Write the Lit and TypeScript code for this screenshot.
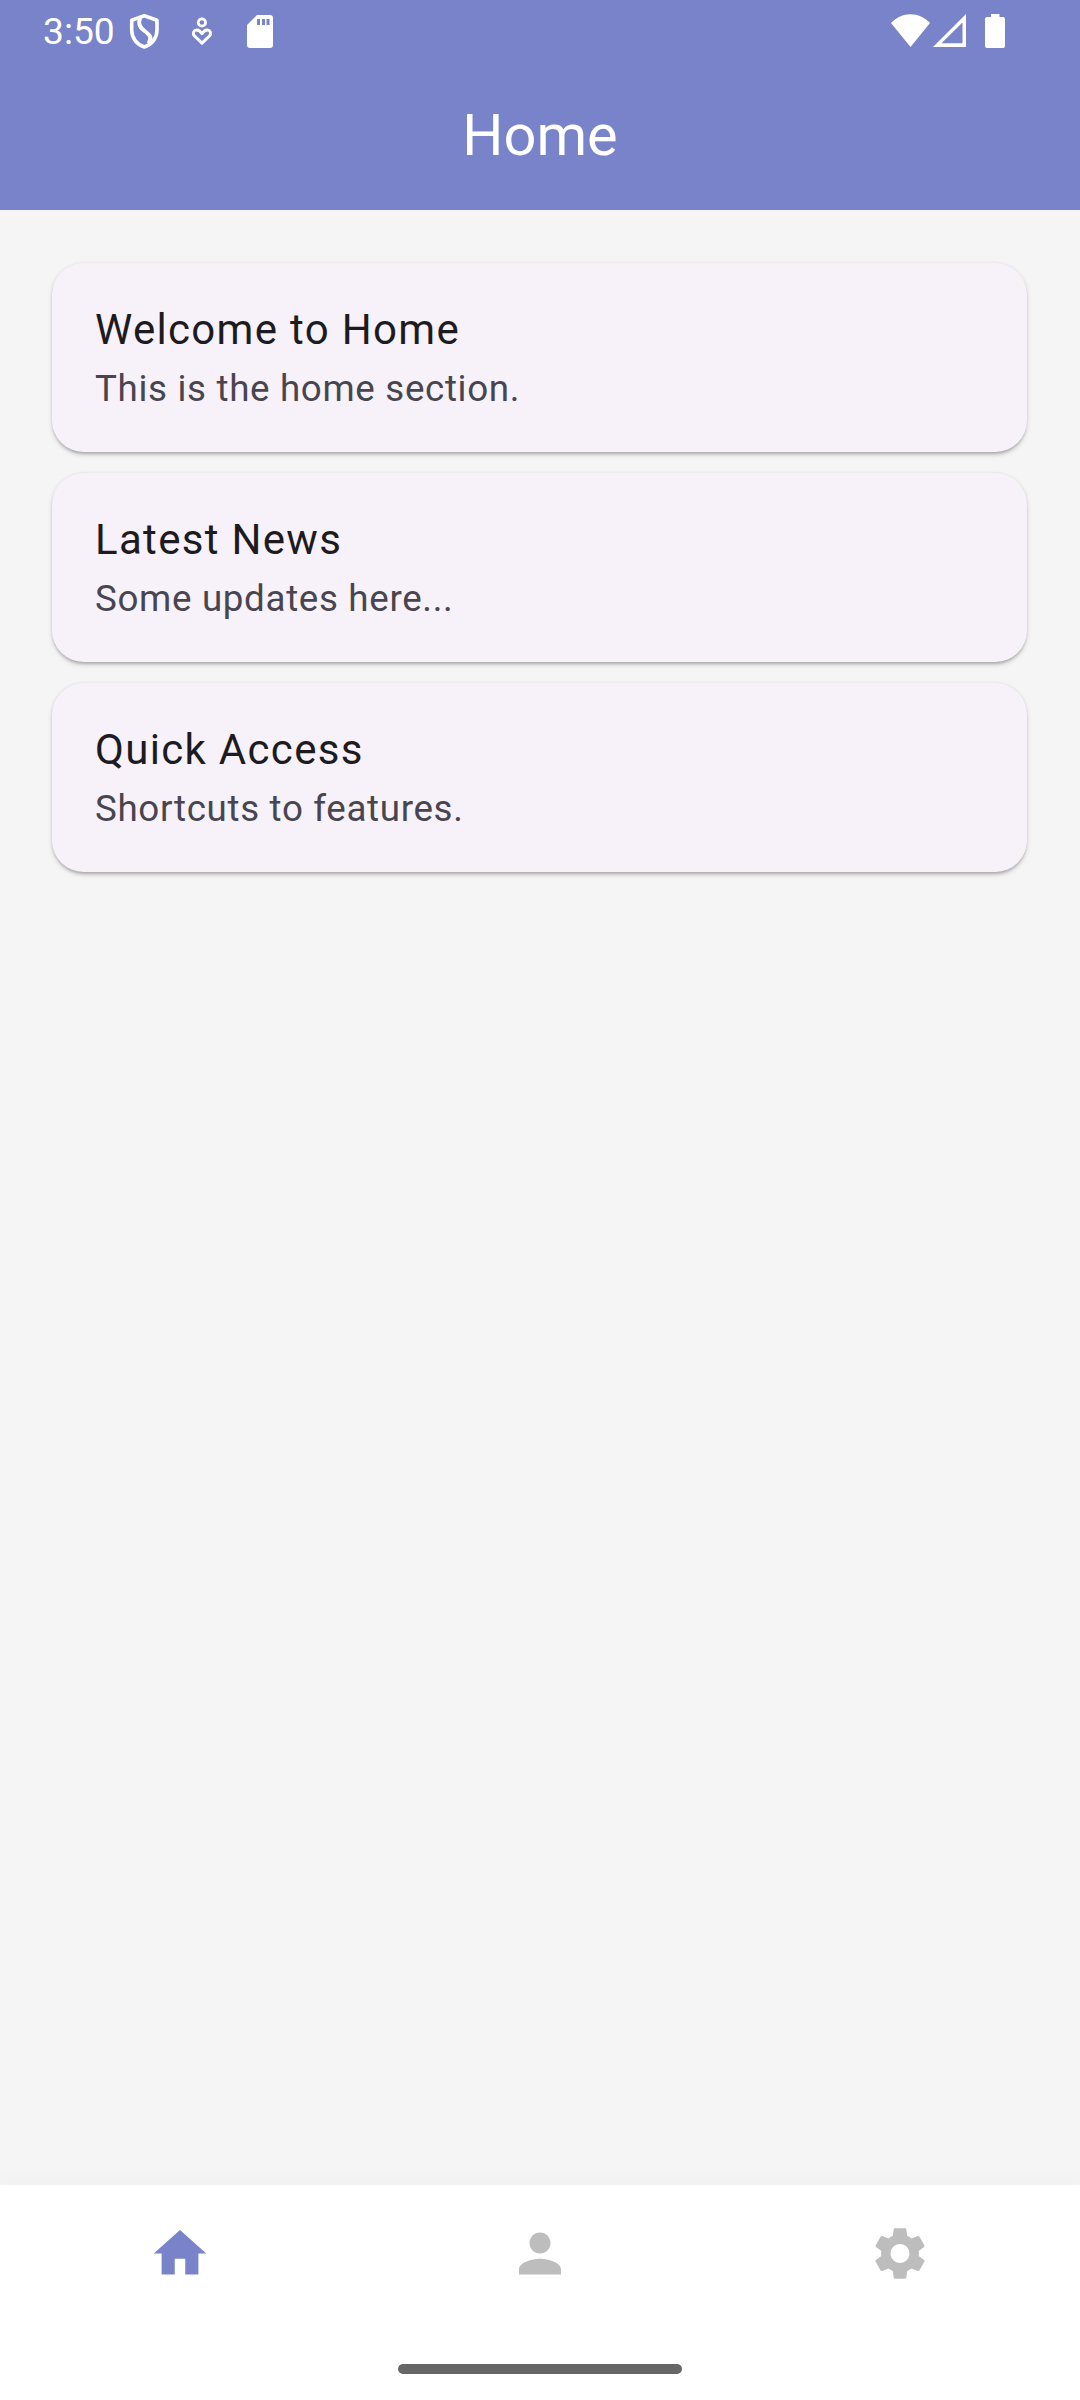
import { LitElement, html, svg, css } from "lit";
import { customElement, property, state } from "lit/decorators.js";

@customElement("status-bar")
class StatusBar extends LitElement {
  static styles = css`
    :host {
      display: flex;
      justify-content: space-between;
      height: 63px;
      padding: 0 75px 0 43px;
      box-sizing: border-box;
      color: #fff;
    }
    .group {
      display: flex;
      align-items: flex-start;
    }
    .time {
      width: 86px;
      font-size: 37.2px;
      line-height: 43px;
      padding-top: 10px;
    }
    svg {
      display: block;
      fill: currentColor;
    }
    .outline {
      fill: none;
      stroke: currentColor;
    }
  `;

  render() {
    return html`
      <div class="group">
        <span class="time">3:50</span>
        <svg width="155" height="63" viewBox="129 0 155 63">
          <g class="outline" stroke-width="3.6" stroke-linejoin="round">
            <path d="M144.3 15.8 L157 20.3 V30 C157 38 152 44.500 144.300 47 C136.700 44.500 131.700 38 131.700 30 V20.300 Z" />
            <path d="M140.200 18 C137.500 24 140 27.500 144 30.500 C150 35 152.500 37.500 148.500 43.500" stroke-width="4" />
            <circle cx="201.900" cy="22.500" r="3.700" stroke-width="2.800" />
            <path d="M202 43.200 L194.600 36 C192.300 33.500 193.600 30.300 196.600 30 C199 29.900 200.700 31.700 202 33.600 C203.300 31.700 205 29.900 207.400 30 C210.400 30.300 211.700 33.500 209.400 36 Z" stroke-width="3" />
          </g>
          <path fill-rule="evenodd" d="M257 15 H270 Q273 15 273 18 V45 Q273 48 270 48 H250 Q247 48 247 45 V25 Z M257 19 V25 H260 V19 Z M262 19 V25 H265 V19 Z M266.500 19 V25 H269.500 V19 Z" />
        </svg>
      </div>
      <svg width="115" height="63" viewBox="890 0 115 63">
        <path d="M910.500 47 L891 23 C896.500 17.500 903 14.300 910.500 14.300 C918 14.300 924.500 17.500 930 23 Z" />
        <path fill-rule="evenodd" d="M966 14 V47 H933 Z M962.500 22.500 L941.500 43.300 H962.500 Z" />
        <path d="M991 14 H999.500 V17 H1003 Q1005 17 1005 19 V46 Q1005 48 1003 48 H987 Q985 48 985 46 V19 Q985 17 987 17 H991 Z" />
      </svg>
    `;
  }
}

@customElement("info-card")
class InfoCard extends LitElement {
  @property() heading = "";
  @property() detail = "";

  static styles = css`
    :host {
      display: block;
      height: 189px;
      box-sizing: border-box;
      padding: 35px 43px;
      border-radius: 31.5px;
      background: #f7f2fa;
      box-shadow:
        0 2.6px 2.6px -1px rgba(0, 0, 0, 0.18),
        0 2.6px 5px rgba(0, 0, 0, 0.13),
        0 0 3px rgba(0, 0, 0, 0.06);
    }
    .heading {
      font-size: 42px;
      line-height: 63px;
      letter-spacing: 1.3125px;
      color: #1d1b20;
    }
    .detail {
      font-size: 36.75px;
      line-height: 52px;
      letter-spacing: 0.65625px;
      padding-top: 2px;
      color: #49454f;
    }
  `;

  render() {
    return html`
      <div class="heading">${this.heading}</div>
      <div class="detail">${this.detail}</div>
    `;
  }
}

const NAV_ICONS = [
  svg`<path d="M10 20v-6h4v6h5v-8h3L12 3 2 12h3v8z" />`,
  svg`<path d="M12 12c2.210 0 4-1.790 4-4s-1.790-4-4-4-4 1.790-4 4 1.790 4 4 4zm0 2c-2.670 0-8 1.340-8 4v2h16v-2c0-2.660-5.330-4-8-4z" />`,
  svg`<path d="M19.140 12.940c.04-.3.06-.61.06-.94 0-.32-.02-.64-.07-.94l2.030-1.580c.18-.14.23-.41.12-.61l-1.920-3.320c-.12-.22-.37-.29-.59-.22l-2.390.96c-.5-.38-1.030-.7-1.620-.94l-.36-2.540c-.04-.24-.24-.41-.48-.41h-3.840c-.24 0-.43.17-.47.41l-.36 2.540c-.59.24-1.130.57-1.620.94l-2.390-.96c-.22-.08-.47 0-.59.22L2.740 8.870c-.12.21-.08.47.12.61l2.030 1.580c-.05.3-.09.63-.09.94s.02.64.07.94l-2.030 1.580c-.18.14-.23.41-.12.61l1.920 3.320c.12.22.37.29.59.22l2.390-.96c.5.38 1.030.7 1.620.94l.36 2.540c.05.24.24.41.48.41h3.840c.24 0 .44-.17.47-.41l.36-2.540c.59-.24 1.130-.56 1.620-.94l2.390.96c.22.08.47 0 .59-.22l1.920-3.320c.12-.22.07-.47-.12-.61l-2.010-1.580zM12 15.600c-1.980 0-3.600-1.620-3.600-3.600s1.620-3.600 3.600-3.600 3.600 1.620 3.600 3.600-1.620 3.600-3.600 3.600z" />`,
];

@customElement("app-root")
class AppRoot extends LitElement {
  @state() private active = 0;

  private cards = [
    ["Welcome to Home", "This is the home section."],
    ["Latest News", "Some updates here..."],
    ["Quick Access", "Shortcuts to features."],
  ];

  static styles = css`
    :host {
      display: flex;
      flex-direction: column;
      width: 1080px;
      height: 2400px;
      background: #f5f5f5;
      font-family: Roboto, sans-serif;
    }
    .header {
      height: 210px;
      background: #7883c9;
      color: #fff;
    }
    .title {
      text-align: center;
      font-size: 57.75px;
      line-height: 73.5px;
      padding-top: 36px;
    }
    .content {
      flex: 1;
      display: flex;
      flex-direction: column;
      gap: 21px;
      padding: 53px 53px 53px 52px;
    }
    .nav {
      height: 215px;
      box-sizing: border-box;
      display: flex;
      flex-direction: column;
      justify-content: space-between;
      align-items: center;
      padding: 37px 0 26px;
      background: #fff;
      box-shadow: 0 0 21px rgba(0, 0, 0, 0.04);
    }
    .tabs {
      display: grid;
      grid-template-columns: repeat(3, 1fr);
      width: 100%;
    }
    .tab {
      display: flex;
      justify-content: center;
      color: #bdbdbd;
    }
    .tab.active {
      color: #7883c9;
    }
    .tab svg {
      display: block;
      width: 64px;
      height: 63px;
      fill: currentColor;
    }
    .handle {
      width: 284px;
      height: 10px;
      border-radius: 5px;
      background: #666;
    }
  `;

  render() {
    return html`
      <div class="header">
        <status-bar></status-bar>
        <div class="title">Home</div>
      </div>
      <div class="content">
        ${this.cards.map(
          ([heading, detail]) => html`<info-card .heading=${heading} .detail=${detail}></info-card>`,
        )}
      </div>
      <div class="nav">
        <div class="tabs">
          ${NAV_ICONS.map(
            (icon, i) => html`<div class="tab ${i === this.active ? "active" : ""}" @click=${() => (this.active = i)}>
              <svg viewBox="0 0 24 24">${icon}</svg>
            </div>`,
          )}
        </div>
        <div class="handle"></div>
      </div>
    `;
  }
}
